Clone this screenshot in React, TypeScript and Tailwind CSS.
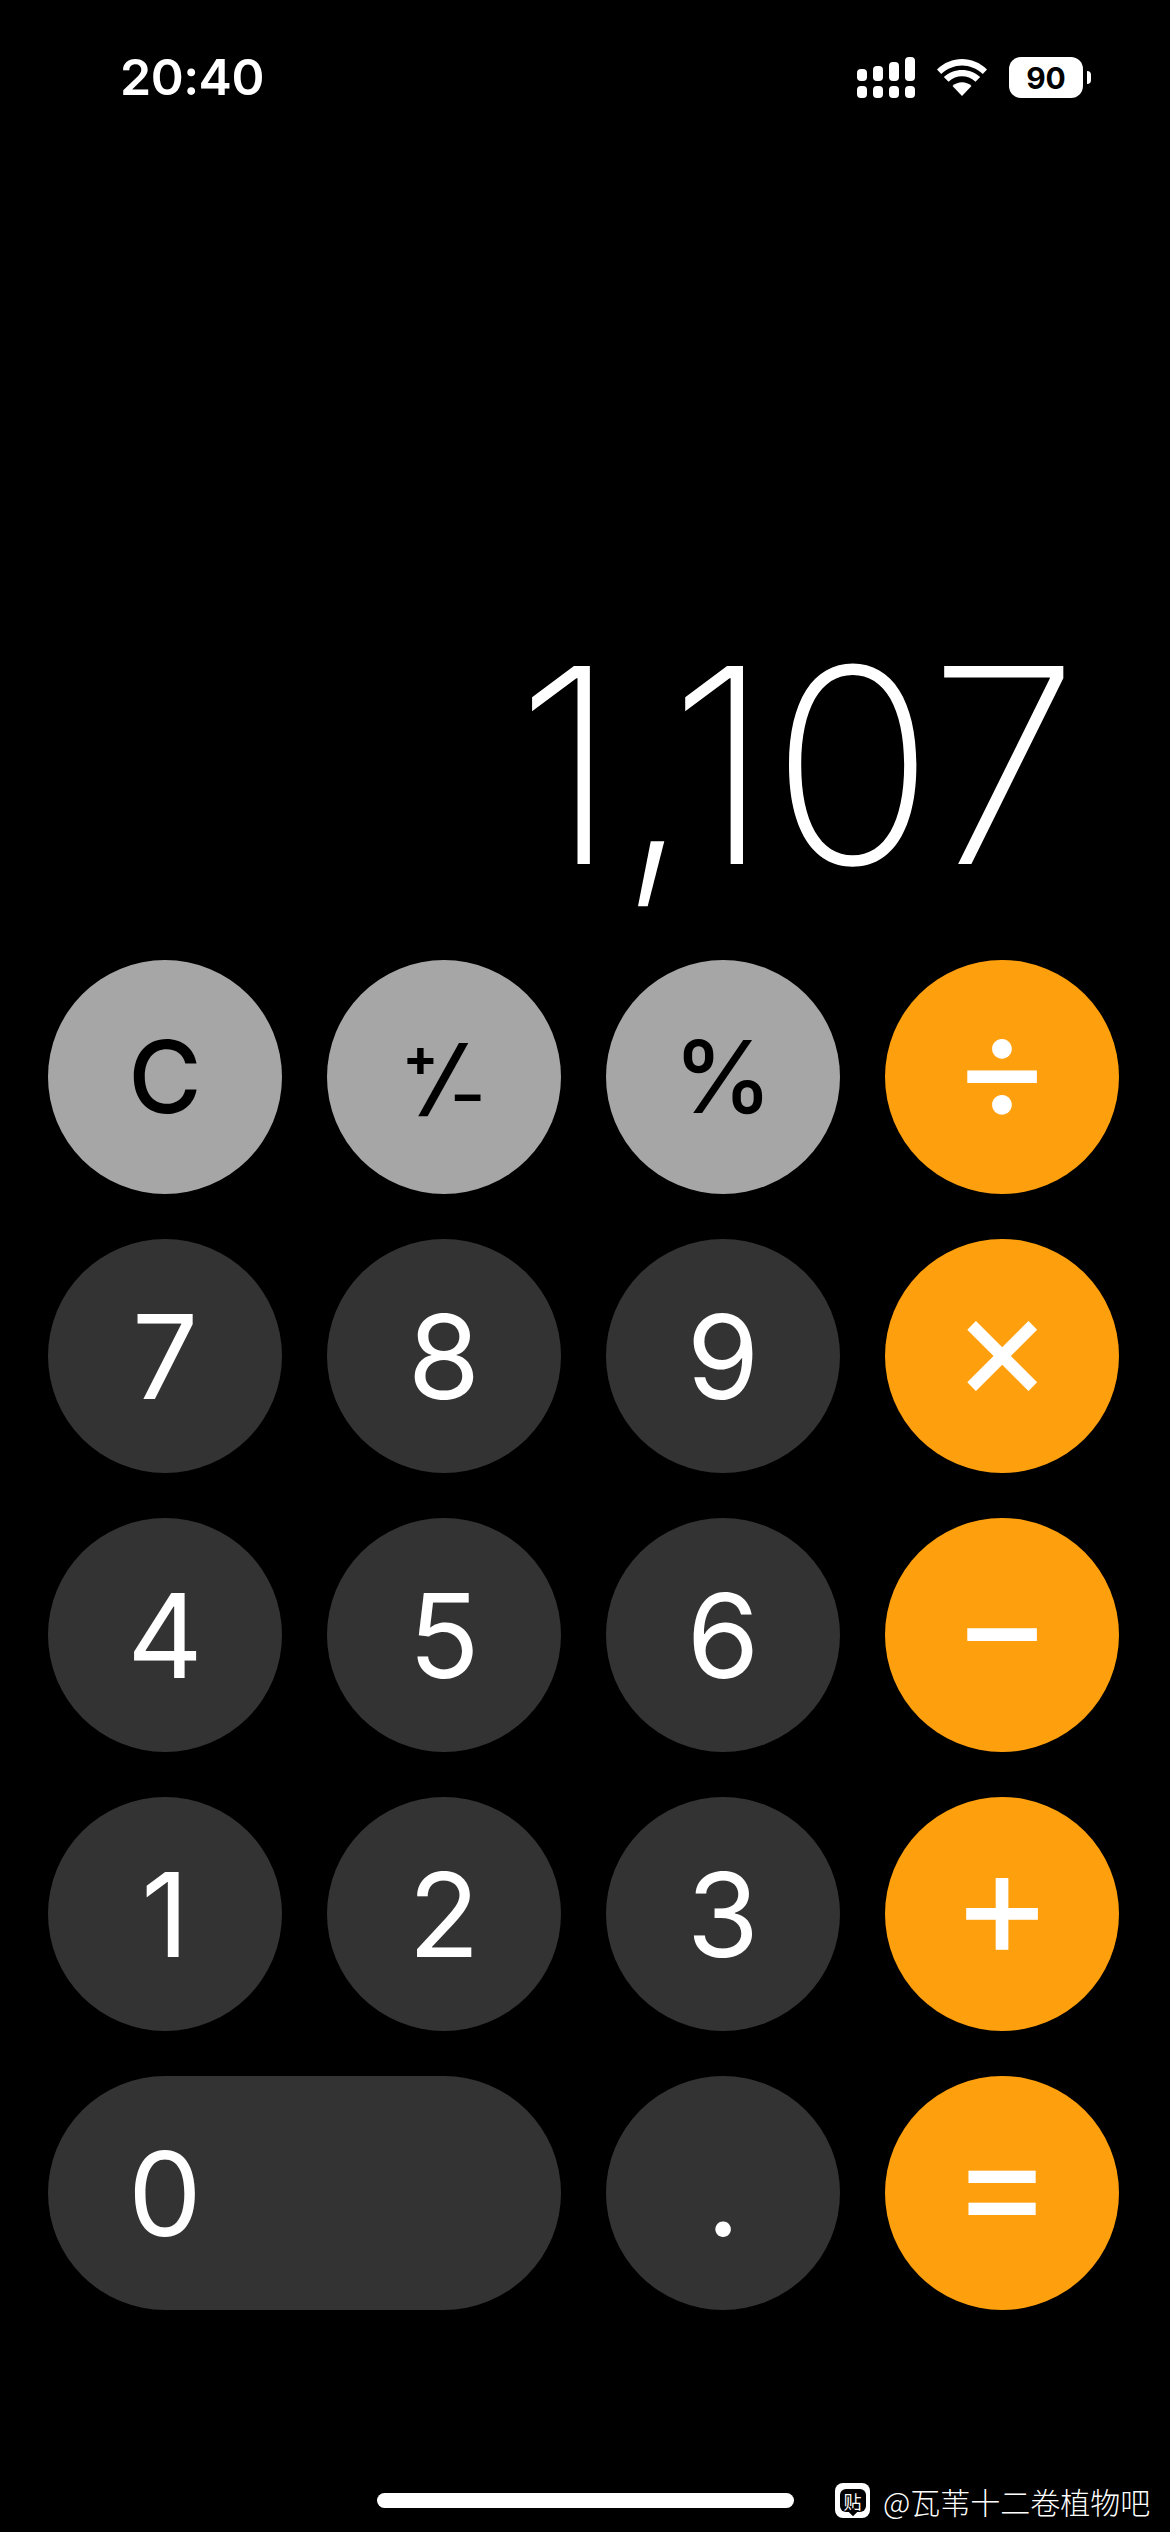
import React from 'react';

const SF = 'font-["Inter","Liberation_Sans",sans-serif]';

function Signal() {
  const bars = [
    { x: 0, y: 12, h: 12 },
    { x: 16, y: 9, h: 15 },
    { x: 32, y: 5, h: 19 },
    { x: 48, y: 0, h: 24 },
  ];
  return (
    <svg width="58" height="41" viewBox="0 0 58 41" fill="#fff">
      {bars.map((b) => (
        <rect key={b.x} x={b.x} y={b.y} width="10" height={b.h} rx="4" />
      ))}
      {bars.map((b) => (
        <rect key={b.x} x={b.x} y="29" width="10" height="12" rx="4" />
      ))}
    </svg>
  );
}

function Wifi() {
  return (
    <svg width="50" height="37" viewBox="0 0 50 37" fill="#fff">
      <path d="M25 37 L15.5 27 C21 22 29 22 34.5 27 Z" />
      <path d="M11.5 22.8 L6.8 18 C17 8.5 33 8.5 43.2 18 L38.5 22.8 C30.5 15.5 19.5 15.5 11.5 22.8 Z" />
      <path d="M4.2 15 L0 10.5 C14 -3.5 36 -3.5 50 10.5 L45.8 15 C33.5 3.5 16.5 3.5 4.2 15 Z" />
    </svg>
  );
}

function Battery() {
  return (
    <div className="flex items-center gap-[4px]">
      <div className="flex h-[41px] w-[74px] items-center justify-center rounded-[12px] bg-white text-[30px] font-bold leading-none text-black">
        90
      </div>
      <div className="h-[13px] w-[4px] rounded-r-full bg-white" />
    </div>
  );
}

function Key({ label, kind = 'num', wide = false }: { label: React.ReactNode; kind?: 'num' | 'fn' | 'op'; wide?: boolean }) {
  const tone =
    kind === 'fn'
      ? 'bg-[#a5a6a5] text-black text-[100px] font-medium'
      : kind === 'op'
        ? 'bg-[#fe9f0d] text-white text-[152px] font-normal'
        : 'bg-[#333333] text-white text-[117px] font-[375]';
  return (
    <div className={`flex h-[234px] items-center rounded-full leading-none ${tone} ${wide ? 'col-span-2 justify-start' : 'justify-center'}`}>
      <span className={`${wide ? 'w-[234px] text-center' : ''} ${kind === 'op' ? '-translate-y-[12px]' : ''}`}>{label}</span>
    </div>
  );
}

export default function App() {
  return (
    <div className={`flex h-[2532px] w-[1170px] flex-col overflow-hidden bg-black ${SF}`}>
      {/* Status bar */}
      <div className="flex shrink-0 items-center justify-between pl-[120px] pr-[79px] pt-[57px]">
        <span className="text-[50px] font-semibold leading-[41px] tracking-[-0.5px] text-white">20:40</span>
        <div className="flex items-center gap-[22px]">
          <Signal />
          <Wifi />
          <Battery />
        </div>
      </div>

      {/* Display */}
      <div className="flex h-[862px] shrink-0 items-end justify-end pb-[59px] pr-[92px]">
        <span className="text-[272px] font-extralight leading-[272px] tracking-[-1px] text-white">1,107</span>
      </div>

      {/* Keypad */}
      <div className="grid grid-cols-[234px_234px_234px_234px] gap-[45px] pl-[48px]">
        <Key kind="fn" label="C" />
        <Key
          kind="fn"
          label={
            <span className="flex items-center">
              <span className="-translate-y-[19px] text-[52px] font-bold">+</span>
              <span className="-mx-[10px] -skew-x-[16deg] text-[84px] font-semibold">/</span>
              <span className="translate-y-[18px] text-[52px] font-bold">−</span>
            </span>
          }
        />
        <Key kind="fn" label="%" />
        <Key kind="op" label="÷" />
        <Key label="7" />
        <Key label="8" />
        <Key label="9" />
        <Key kind="op" label="×" />
        <Key label="4" />
        <Key label="5" />
        <Key label="6" />
        <Key kind="op" label="−" />
        <Key label="1" />
        <Key label="2" />
        <Key label="3" />
        <Key kind="op" label="+" />
        <Key wide label="0" />
        <Key label="." />
        <Key kind="op" label="=" />
      </div>

      {/* Home indicator + watermark */}
      <div className="relative mt-[183px] flex h-[15px] shrink-0 items-center pl-[377px]">
        <div className="h-[15px] w-[417px] rounded-full bg-white" />
        <div className="absolute left-[835px] top-[-10px] flex items-center gap-[13px]">
          <div className="flex h-[35px] w-[35px] items-center justify-center rounded-[8px] bg-white">
            <div className='relative flex h-[23px] w-[26px] items-center justify-center rounded-[6px] bg-black font-["Noto_Sans_CJK_SC",sans-serif] text-[18px] leading-none text-white'>
              贴
              <div className="absolute bottom-[-3px] left-[10px] h-[6px] w-[6px] rotate-45 bg-black" />
            </div>
          </div>
          <span className='whitespace-nowrap font-["Noto_Sans_CJK_SC",sans-serif] text-[30px] font-light leading-none text-white'>
            @瓦苇十二卷植物吧
          </span>
        </div>
      </div>
    </div>
  );
}
